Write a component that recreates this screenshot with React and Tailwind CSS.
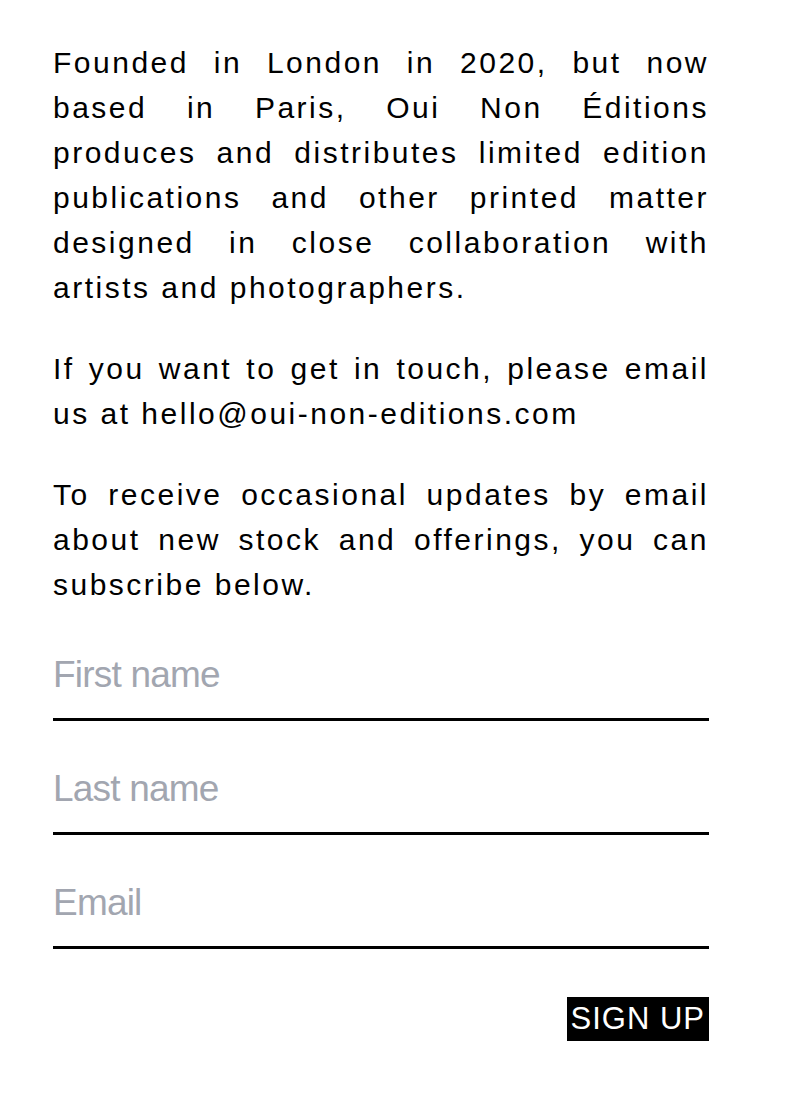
import { useState } from "react";

const App = () => {
  const [firstName, setFirstName] = useState("");
  const [lastName, setLastName] = useState("");
  const [email, setEmail] = useState("");

  const inputClass =
    "block w-full h-[69px] pb-[21px] border-b-[3px] border-black bg-transparent text-[37px] leading-[45px] tracking-[-0.8px] text-black placeholder:text-[#a2a6b0] focus:outline-none";

  return (
    <div
      className="min-h-[1104px] bg-white pt-[40px]"
      style={{ fontFamily: '"Liberation Sans", Arial, sans-serif' }}
    >
      <div className="ml-[53px] w-[656px] text-black">
        <div className="text-[30px] leading-[45px] tracking-[2.5px] text-justify">
          <p className="mb-[36px]">
            Founded in London in 2020, but now based in Paris, Oui Non Éditions
            produces and distributes limited edition publications and other
            printed matter designed in close collaboration with artists and
            photographers.
          </p>
          <p className="mb-[36px]">
            If you want to get in touch, please email us at
            hello@oui-non-editions.com
          </p>
          <p>
            To receive occasional updates by email about new stock and
            offerings, you can subscribe below.
          </p>
        </div>

        {/* formulaire newsletter */}
        <form
          className="mt-[45px] flex flex-col gap-[45px]"
          onSubmit={(e) => e.preventDefault()}
        >
          <input
            type="text"
            placeholder="First name"
            className={inputClass}
            value={firstName}
            onChange={(e) => setFirstName(e.target.value)}
          />
          <input
            type="text"
            placeholder="Last name"
            className={inputClass}
            value={lastName}
            onChange={(e) => setLastName(e.target.value)}
          />
          <input
            type="email"
            placeholder="Email"
            className={inputClass}
            value={email}
            onChange={(e) => setEmail(e.target.value)}
          />
          <div className="flex justify-end mt-[3px]">
            <button
              type="submit"
              className="h-[44px] px-[4px] bg-black text-white text-[31px] leading-[44px] tracking-[1px]"
            >
              SIGN UP
            </button>
          </div>
        </form>
      </div>
    </div>
  );
};

export default App;
